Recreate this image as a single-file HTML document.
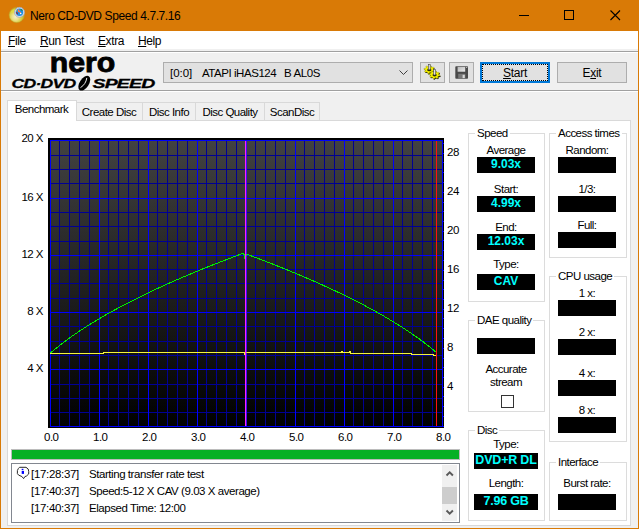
<!DOCTYPE html>
<html><head><meta charset="utf-8"><title>Nero CD-DVD Speed 4.7.7.16</title>
<style>
*{box-sizing:border-box;margin:0;padding:0}
html,body{width:639px;height:529px;overflow:hidden;background:#f0f0f0}
body{position:relative;font-family:"Liberation Sans",Arial,sans-serif;font-size:11.5px;letter-spacing:-0.52px;color:#000;line-height:14px}
.abs{position:absolute}
#win{position:absolute;left:0;top:0;width:639px;height:529px;border:1px solid #d97a06;border-top:none;background:#f0f0f0}
#title{position:absolute;left:0;top:0;width:639px;height:31px;background:#d97a06}
#title .t{position:absolute;left:30px;top:9px;font-size:12px;line-height:15px;white-space:nowrap;letter-spacing:-0.4px}
#menu{position:absolute;left:1px;top:31px;width:637px;height:18px;background:#fff}
#menu span{position:absolute;top:3px;line-height:14px;white-space:nowrap;font-size:12px;letter-spacing:-0.4px}
u{text-decoration:underline;text-underline-offset:1px}
.hline{position:absolute;left:1px;width:637px;height:1px}
.lbl{position:absolute;white-space:nowrap;text-align:center;line-height:14px}
.box{position:absolute;background:#000;height:16px;color:#00ffff;font-weight:bold;text-align:center;font-size:12px;letter-spacing:0;line-height:15px;white-space:nowrap}
.grp{position:absolute;border:1px solid #dcdcdc}
.grp>b{position:absolute;top:-8px;left:6px;background:#fff;font-weight:normal;padding:0 2px;line-height:14px;white-space:nowrap}
.tab{position:absolute;top:102px;height:18px;border:1px solid #d9d9d9;border-bottom:none;background:#f0f0f0;text-align:center;line-height:18px;white-space:nowrap}
.btn{position:absolute;top:62px;height:21px;background:#e1e1e1;border:1px solid #adadad}
.ax{position:absolute;white-space:nowrap;line-height:14px}
</style></head><body>
<div id="win"></div>
<div id="title">
<svg class="abs" style="left:8px;top:6px" width="18" height="18" viewBox="8 6 18 18">
<defs><radialGradient id="cd" cx="0.42" cy="0.62" r="0.62"><stop offset="0" stop-color="#f4eecc"/><stop offset="0.35" stop-color="#ece28c"/><stop offset="0.7" stop-color="#d6ca38"/><stop offset="1" stop-color="#b4a424"/></radialGradient></defs>
<circle cx="16.700" cy="15" r="7.600" fill="url(#cd)" stroke="#b8a834" stroke-width="0.500"/>
<path d="M10.500 12.500a7 7 0 0 1 4-4l1.500 4z" fill="#e8e040" opacity="0.700"/>
<circle cx="19.500" cy="12.300" r="5" fill="#dcdfee" stroke="#9ca0bc" stroke-width="0.700"/>
<circle cx="19.500" cy="12.300" r="3.700" fill="#1e90e4"/>
<path d="M17.800 9.200l1.300 .3 .6 1.600 1.400 1.600 -.8 .6 -1.400-1.400 -.9 .2z" fill="#ff7848"/>
<path d="M16.200 11.800l1 .4 .8 1.800 -.6 .6 -1.100-1.400z" fill="#a01818"/>
<path d="M20.300 9l2 .6 .4 1.200 -1.600-.4z" fill="#208838"/>
<rect x="16.200" y="10.400" width="0.900" height="0.800" fill="#f8e020"/>
<circle cx="20.700" cy="13.500" r="0.800" fill="#fff"/>
</svg>
<div class="t">Nero CD-DVD Speed 4.7.7.16</div>
<svg class="abs" style="left:500px;top:0" width="139" height="31" viewBox="0 0 139 31" shape-rendering="crispEdges">
<rect x="19" y="15" width="10" height="1" fill="#000"/>
<rect x="64.5" y="10.5" width="9" height="9" fill="none" stroke="#000" stroke-width="1"/>
<path d="M110.500 10.500l9.500 9.500M120 10.500l-9.500 9.500" stroke="#000" stroke-width="1.1" fill="none" shape-rendering="auto"/>
</svg>
</div>
<div id="menu">
<span style="left:7px"><u>F</u>ile</span>
<span style="left:39px"><u>R</u>un Test</span>
<span style="left:97px"><u>E</u>xtra</span>
<span style="left:137px"><u>H</u>elp</span>
</div>
<div class="hline" style="top:51px;background:#a0a0a0"></div>
<div class="hline" style="top:52px;background:#fff"></div>
<div class="hline" style="top:90px;background:#a0a0a0"></div>
<div class="hline" style="top:91px;background:#fff"></div>

<!-- logo -->
<svg class="abs" style="left:5px;top:50px" width="160" height="42" viewBox="5 50 160 42">
<text x="49.800" y="71.600" font-family="Liberation Sans, Arial, sans-serif" font-weight="bold" font-size="28.500" textLength="65.500" lengthAdjust="spacingAndGlyphs" fill="#000" stroke="#000" stroke-width="0.9" letter-spacing="0">nero</text>
<text x="11.500" y="87.600" font-family="Liberation Sans, Arial, sans-serif" font-weight="bold" font-style="italic" font-size="12.800" textLength="64" lengthAdjust="spacingAndGlyphs" fill="#000" stroke="#000" stroke-width="0.3">CD·DVD</text>
<text x="92.500" y="87.600" font-family="Liberation Sans, Arial, sans-serif" font-weight="bold" font-style="italic" font-size="12.800" textLength="62" lengthAdjust="spacingAndGlyphs" fill="#000" stroke="#000" stroke-width="0.3">SPEED</text>
<g transform="translate(84.300 83.200) rotate(33)"><ellipse cx="0" cy="0" rx="4.600" ry="8.300" fill="#000"/><path d="M-0.800 -5.800C1 -2 1 2 -0.800 5.800" stroke="#f0f0f0" stroke-width="0.900" fill="none"/></g>
</svg>
<!-- combo -->
<div class="abs" style="left:163px;top:62px;width:250px;height:21px;background:#e1e1e1;border:1px solid #adadad"></div>
<div class="abs" style="left:170px;top:66px;white-space:pre;line-height:14px;letter-spacing:-0.05px">[0:0]</div><div class="abs" style="left:202px;top:66px;white-space:pre;line-height:14px;letter-spacing:-0.45px">ATAPI iHAS124</div><div class="abs" style="left:284px;top:66px;white-space:pre;line-height:14px;letter-spacing:-0.4px">B AL0S</div>
<svg class="abs" style="left:398px;top:69px" width="12" height="8" viewBox="0 0 12 8"><path d="M1.500 1.500l4 4l4-4" stroke="#404040" stroke-width="1" fill="none"/></svg>

<div class="btn" style="left:420px;width:25px"></div>
<svg class="abs" style="left:420px;top:62px" width="25" height="21" viewBox="420 62 25 21">
<path d="M429.85 65.52 L430.91 65.68 L431.23 66.93 L431.89 67.26 L433.56 67.00 L434.16 67.67 L433.20 68.72 L433.35 69.31 L434.77 70.01 L434.56 70.80 L432.89 71.04 L432.44 71.53 L432.78 72.77 L431.88 73.22 L430.47 72.50 L429.69 72.62 L428.75 73.68 L427.69 73.52 L427.37 72.27 L426.71 71.94 L425.04 72.20 L424.44 71.53 L425.40 70.48 L425.25 69.89 L423.83 69.19 L424.04 68.40 L425.71 68.16 L426.16 67.67 L425.82 66.43 L426.72 65.98 L428.13 66.70 L428.91 66.58Z" fill="#181800" transform="translate(0.600 0.900)"/>
<path d="M429.85 65.52 L430.91 65.68 L431.23 66.93 L431.89 67.26 L433.56 67.00 L434.16 67.67 L433.20 68.72 L433.35 69.31 L434.77 70.01 L434.56 70.80 L432.89 71.04 L432.44 71.53 L432.78 72.77 L431.88 73.22 L430.47 72.50 L429.69 72.62 L428.75 73.68 L427.69 73.52 L427.37 72.27 L426.71 71.94 L425.04 72.20 L424.44 71.53 L425.40 70.48 L425.25 69.89 L423.83 69.19 L424.04 68.40 L425.71 68.16 L426.16 67.67 L425.82 66.43 L426.72 65.98 L428.13 66.70 L428.91 66.58Z" fill="#f4f000" stroke="#707000" stroke-width="0.300"/>
<ellipse cx="429.3" cy="69.89999999999999" rx="2.100" ry="1.300" fill="#2a2a00"/>
<rect x="428.3" y="64.4" width="1.900" height="5.400" fill="#e0e0e0" stroke="#484848" stroke-width="0.600"/>
<path d="M435.15 70.72 L436.21 70.88 L436.53 72.13 L437.19 72.46 L438.86 72.20 L439.46 72.87 L438.50 73.92 L438.65 74.51 L440.07 75.21 L439.86 76.00 L438.19 76.24 L437.74 76.73 L438.08 77.97 L437.18 78.42 L435.77 77.70 L434.99 77.82 L434.05 78.88 L432.99 78.72 L432.67 77.47 L432.01 77.14 L430.34 77.40 L429.74 76.73 L430.70 75.68 L430.55 75.09 L429.13 74.39 L429.34 73.60 L431.01 73.36 L431.46 72.87 L431.12 71.63 L432.02 71.18 L433.43 71.90 L434.21 71.78Z" fill="#181800" transform="translate(0.600 0.900)"/>
<path d="M435.15 70.72 L436.21 70.88 L436.53 72.13 L437.19 72.46 L438.86 72.20 L439.46 72.87 L438.50 73.92 L438.65 74.51 L440.07 75.21 L439.86 76.00 L438.19 76.24 L437.74 76.73 L438.08 77.97 L437.18 78.42 L435.77 77.70 L434.99 77.82 L434.05 78.88 L432.99 78.72 L432.67 77.47 L432.01 77.14 L430.34 77.40 L429.74 76.73 L430.70 75.68 L430.55 75.09 L429.13 74.39 L429.34 73.60 L431.01 73.36 L431.46 72.87 L431.12 71.63 L432.02 71.18 L433.43 71.90 L434.21 71.78Z" fill="#f4f000" stroke="#707000" stroke-width="0.300"/>
<ellipse cx="434.6" cy="75.1" rx="2.100" ry="1.300" fill="#2a2a00"/>
<rect x="433.6" y="69.6" width="1.900" height="5.400" fill="#e0e0e0" stroke="#484848" stroke-width="0.600"/>
</svg>
<div class="btn" style="left:449px;width:25px"></div>
<svg class="abs" style="left:455px;top:66px" width="14" height="14" viewBox="0 0 14 14">
<defs><linearGradient id="fl" x1="0" y1="0" x2="1" y2="1"><stop offset="0" stop-color="#b8b8b8"/><stop offset="1" stop-color="#ececec"/></linearGradient></defs>
<rect x="0.300" y="0.300" width="12.700" height="12.400" rx="0.800" fill="#4a4a4a"/>
<rect x="2.600" y="0.900" width="7.600" height="4.800" fill="url(#fl)"/>
<rect x="11.200" y="0.900" width="1" height="1.100" fill="#d0d0d0"/>
<rect x="3.200" y="7.800" width="7.200" height="4.900" fill="#787878"/>
<rect x="7.600" y="8.800" width="2.200" height="3.300" fill="#d8d8d8"/>
</svg>
<div class="btn" style="left:480px;width:70px;border:2px solid #0078d7"></div>
<div class="abs" style="left:482px;top:64px;width:66px;height:17px;border:1px dotted #000"></div>
<div class="lbl" style="left:480px;top:66px;width:70px;font-size:12px;letter-spacing:-0.3px"><u>S</u>tart</div>
<div class="btn" style="left:557px;width:70px"></div>
<div class="lbl" style="left:557px;top:66px;width:70px;font-size:12px;letter-spacing:-0.3px">E<u>x</u>it</div>

<!-- tab panel -->
<div class="abs" style="left:7px;top:120px;width:624px;height:406px;background:#fff;border:1px solid #d9d9d9"></div>
<div class="tab" style="left:75px;width:68px">Create Disc</div>
<div class="tab" style="left:142px;width:54px">Disc Info</div>
<div class="tab" style="left:195px;width:70px">Disc Quality</div>
<div class="tab" style="left:264px;width:56px">ScanDisc</div>
<div class="tab" style="left:7px;top:100px;width:70px;height:21px;background:#fff;line-height:17px;text-indent:-1px">Benchmark</div>

<!-- axes labels -->
<div class="ax" style="left:9px;top:131px;width:34px;text-align:right">20 X</div>
<div class="ax" style="left:9px;top:190px;width:34px;text-align:right">16 X</div>
<div class="ax" style="left:9px;top:247px;width:34px;text-align:right">12 X</div>
<div class="ax" style="left:9px;top:304px;width:34px;text-align:right">8 X</div>
<div class="ax" style="left:9px;top:361px;width:34px;text-align:right">4 X</div>
<div class="ax" style="left:447px;top:145px">28</div>
<div class="ax" style="left:447px;top:184px">24</div>
<div class="ax" style="left:447px;top:223px">20</div>
<div class="ax" style="left:447px;top:262px">16</div>
<div class="ax" style="left:447px;top:301px">12</div>
<div class="ax" style="left:447px;top:340px">8</div>
<div class="ax" style="left:447px;top:379px">4</div>
<div class="ax" style="left:44px;top:430px">0.0</div>
<div class="ax" style="left:93px;top:430px">1.0</div>
<div class="ax" style="left:142px;top:430px">2.0</div>
<div class="ax" style="left:191px;top:430px">3.0</div>
<div class="ax" style="left:240px;top:430px">4.0</div>
<div class="ax" style="left:289px;top:430px">5.0</div>
<div class="ax" style="left:338px;top:430px">6.0</div>
<div class="ax" style="left:387px;top:430px">7.0</div>
<div class="ax" style="left:436px;top:430px">8.0</div>
<svg id="chart" width="400" height="292" viewBox="48 138 400 292" style="position:absolute;left:48px;top:138px" shape-rendering="crispEdges">
<defs><linearGradient id="bg" x1="0" y1="0" x2="0" y2="1"><stop offset="0" stop-color="#424242"/><stop offset="1" stop-color="#000000"/></linearGradient></defs>
<rect x="48" y="138" width="396" height="290" fill="#000"/>
<rect x="50" y="140" width="393" height="287" fill="url(#bg)"/>
<rect x="50" y="140" width="1" height="287" fill="#0000ff"/>
<rect x="59" y="140" width="1" height="287" fill="#000094"/>
<rect x="69" y="140" width="1" height="287" fill="#000094"/>
<rect x="79" y="140" width="1" height="287" fill="#000094"/>
<rect x="89" y="140" width="1" height="287" fill="#000094"/>
<rect x="99" y="140" width="1" height="287" fill="#0000ff"/>
<rect x="108" y="140" width="1" height="287" fill="#000094"/>
<rect x="118" y="140" width="1" height="287" fill="#000094"/>
<rect x="128" y="140" width="1" height="287" fill="#000094"/>
<rect x="138" y="140" width="1" height="287" fill="#000094"/>
<rect x="148" y="140" width="1" height="287" fill="#0000ff"/>
<rect x="157" y="140" width="1" height="287" fill="#000094"/>
<rect x="167" y="140" width="1" height="287" fill="#000094"/>
<rect x="177" y="140" width="1" height="287" fill="#000094"/>
<rect x="187" y="140" width="1" height="287" fill="#000094"/>
<rect x="197" y="140" width="1" height="287" fill="#0000ff"/>
<rect x="206" y="140" width="1" height="287" fill="#000094"/>
<rect x="216" y="140" width="1" height="287" fill="#000094"/>
<rect x="226" y="140" width="1" height="287" fill="#000094"/>
<rect x="236" y="140" width="1" height="287" fill="#000094"/>
<rect x="246" y="140" width="1" height="287" fill="#0000ff"/>
<rect x="255" y="140" width="1" height="287" fill="#000094"/>
<rect x="265" y="140" width="1" height="287" fill="#000094"/>
<rect x="275" y="140" width="1" height="287" fill="#000094"/>
<rect x="285" y="140" width="1" height="287" fill="#000094"/>
<rect x="295" y="140" width="1" height="287" fill="#0000ff"/>
<rect x="304" y="140" width="1" height="287" fill="#000094"/>
<rect x="314" y="140" width="1" height="287" fill="#000094"/>
<rect x="324" y="140" width="1" height="287" fill="#000094"/>
<rect x="334" y="140" width="1" height="287" fill="#000094"/>
<rect x="344" y="140" width="1" height="287" fill="#0000ff"/>
<rect x="353" y="140" width="1" height="287" fill="#000094"/>
<rect x="363" y="140" width="1" height="287" fill="#000094"/>
<rect x="373" y="140" width="1" height="287" fill="#000094"/>
<rect x="383" y="140" width="1" height="287" fill="#000094"/>
<rect x="393" y="140" width="1" height="287" fill="#0000ff"/>
<rect x="402" y="140" width="1" height="287" fill="#000094"/>
<rect x="412" y="140" width="1" height="287" fill="#000094"/>
<rect x="422" y="140" width="1" height="287" fill="#000094"/>
<rect x="432" y="140" width="1" height="287" fill="#000094"/>
<rect x="442" y="140" width="1" height="287" fill="#0000ff"/>
<rect x="50" y="426" width="393" height="1" fill="#0000ff"/>
<rect x="50" y="412" width="393" height="1" fill="#000094"/>
<rect x="50" y="398" width="393" height="1" fill="#000094"/>
<rect x="50" y="384" width="393" height="1" fill="#000094"/>
<rect x="50" y="369" width="393" height="1" fill="#0000ff"/>
<rect x="50" y="355" width="393" height="1" fill="#000094"/>
<rect x="50" y="341" width="393" height="1" fill="#000094"/>
<rect x="50" y="326" width="393" height="1" fill="#000094"/>
<rect x="50" y="312" width="393" height="1" fill="#0000ff"/>
<rect x="50" y="298" width="393" height="1" fill="#000094"/>
<rect x="50" y="283" width="393" height="1" fill="#000094"/>
<rect x="50" y="269" width="393" height="1" fill="#000094"/>
<rect x="50" y="255" width="393" height="1" fill="#0000ff"/>
<rect x="50" y="241" width="393" height="1" fill="#000094"/>
<rect x="50" y="226" width="393" height="1" fill="#000094"/>
<rect x="50" y="212" width="393" height="1" fill="#000094"/>
<rect x="50" y="198" width="393" height="1" fill="#0000ff"/>
<rect x="50" y="183" width="393" height="1" fill="#000094"/>
<rect x="50" y="169" width="393" height="1" fill="#000094"/>
<rect x="50" y="155" width="393" height="1" fill="#000094"/>
<rect x="50" y="140" width="393" height="1" fill="#0000ff"/>
<rect x="50" y="140" width="1" height="287" fill="#0000ff"/>
<rect x="99" y="140" width="1" height="287" fill="#0000ff"/>
<rect x="148" y="140" width="1" height="287" fill="#0000ff"/>
<rect x="197" y="140" width="1" height="287" fill="#0000ff"/>
<rect x="246" y="140" width="1" height="287" fill="#0000ff"/>
<rect x="295" y="140" width="1" height="287" fill="#0000ff"/>
<rect x="344" y="140" width="1" height="287" fill="#0000ff"/>
<rect x="393" y="140" width="1" height="287" fill="#0000ff"/>
<rect x="442" y="140" width="1" height="287" fill="#0000ff"/>
<rect x="443" y="426" width="1" height="1" fill="#0000ff"/>
<rect x="443" y="416" width="1" height="1" fill="#0000ff"/>
<rect x="443" y="406" width="1" height="1" fill="#0000ff"/>
<rect x="443" y="396" width="1" height="1" fill="#0000ff"/>
<rect x="443" y="387" width="1" height="1" fill="#0000ff"/>
<rect x="443" y="377" width="1" height="1" fill="#0000ff"/>
<rect x="443" y="367" width="1" height="1" fill="#0000ff"/>
<rect x="443" y="358" width="1" height="1" fill="#0000ff"/>
<rect x="443" y="348" width="1" height="1" fill="#0000ff"/>
<rect x="443" y="338" width="1" height="1" fill="#0000ff"/>
<rect x="443" y="328" width="1" height="1" fill="#0000ff"/>
<rect x="443" y="318" width="1" height="1" fill="#0000ff"/>
<rect x="443" y="309" width="1" height="1" fill="#0000ff"/>
<rect x="443" y="299" width="1" height="1" fill="#0000ff"/>
<rect x="443" y="289" width="1" height="1" fill="#0000ff"/>
<rect x="443" y="280" width="1" height="1" fill="#0000ff"/>
<rect x="443" y="270" width="1" height="1" fill="#0000ff"/>
<rect x="443" y="260" width="1" height="1" fill="#0000ff"/>
<rect x="443" y="250" width="1" height="1" fill="#0000ff"/>
<rect x="443" y="240" width="1" height="1" fill="#0000ff"/>
<rect x="443" y="231" width="1" height="1" fill="#0000ff"/>
<rect x="443" y="221" width="1" height="1" fill="#0000ff"/>
<rect x="443" y="211" width="1" height="1" fill="#0000ff"/>
<rect x="443" y="202" width="1" height="1" fill="#0000ff"/>
<rect x="443" y="192" width="1" height="1" fill="#0000ff"/>
<rect x="443" y="182" width="1" height="1" fill="#0000ff"/>
<rect x="443" y="172" width="1" height="1" fill="#0000ff"/>
<rect x="443" y="162" width="1" height="1" fill="#0000ff"/>
<rect x="443" y="153" width="1" height="1" fill="#0000ff"/>
<rect x="443" y="143" width="1" height="1" fill="#0000ff"/>
<path d="M50.5,353.0 L51.5,352.1 L52.5,351.3 L53.5,350.4 L54.5,349.6 L55.5,348.8 L56.5,348.0 L57.5,347.2 L58.5,346.4 L59.5,345.6 L60.5,344.8 L61.5,344.0 L62.5,343.2 L63.5,342.5 L64.5,341.7 L65.5,341.0 L66.5,340.2 L67.5,339.5 L68.5,338.8 L69.5,338.0 L70.5,337.3 L71.5,336.6 L72.5,335.9 L73.5,335.2 L74.5,334.5 L75.5,333.8 L76.5,333.1 L77.5,332.5 L78.5,331.8 L79.5,331.1 L80.5,330.4 L81.5,329.8 L82.5,329.1 L83.5,328.5 L84.5,327.8 L85.5,327.2 L86.5,326.5 L87.5,325.9 L88.5,325.3 L89.5,324.7 L90.5,324.0 L91.5,323.4 L92.5,322.8 L93.5,322.2 L94.5,321.6 L95.5,321.0 L96.5,320.4 L97.5,319.8 L98.5,319.2 L99.5,318.6 L100.5,318.0 L101.5,317.4 L102.5,316.8 L103.5,316.2 L104.5,315.7 L105.5,315.1 L106.5,314.5 L107.5,313.9 L108.5,313.4 L109.5,312.8 L110.5,312.3 L111.5,311.7 L112.5,311.1 L113.5,310.6 L114.5,310.0 L115.5,309.5 L116.5,309.0 L117.5,308.4 L118.5,307.9 L119.5,307.3 L120.5,306.8 L121.5,306.3 L122.5,305.7 L123.5,305.2 L124.5,304.7 L125.5,304.2 L126.5,303.6 L127.5,303.1 L128.5,302.6 L129.5,302.1 L130.5,301.6 L131.5,301.1 L132.5,300.6 L133.5,300.1 L134.5,299.6 L135.5,299.1 L136.5,298.6 L137.5,298.1 L138.5,297.6 L139.5,297.1 L140.5,296.6 L141.5,296.1 L142.5,295.6 L143.5,295.1 L144.5,294.6 L145.5,294.1 L146.5,293.7 L147.5,293.2 L148.5,292.7 L149.5,292.2 L150.5,291.8 L151.5,291.3 L152.5,290.8 L153.5,290.3 L154.5,289.9 L155.5,289.4 L156.5,288.9 L157.5,288.5 L158.5,288.0 L159.5,287.6 L160.5,287.1 L161.5,286.6 L162.5,286.2 L163.5,285.7 L164.5,285.3 L165.5,284.8 L166.5,284.4 L167.5,283.9 L168.5,283.5 L169.5,283.0 L170.5,282.6 L171.5,282.1 L172.5,281.7 L173.5,281.3 L174.5,280.8 L175.5,280.4 L176.5,279.9 L177.5,279.5 L178.5,279.1 L179.5,278.6 L180.5,278.2 L181.5,277.8 L182.5,277.4 L183.5,276.9 L184.5,276.5 L185.5,276.1 L186.5,275.7 L187.5,275.2 L188.5,274.8 L189.5,274.4 L190.5,274.0 L191.5,273.6 L192.5,273.1 L193.5,272.7 L194.5,272.3 L195.5,271.9 L196.5,271.5 L197.5,271.1 L198.5,270.7 L199.5,270.2 L200.5,269.8 L201.5,269.4 L202.5,269.0 L203.5,268.6 L204.5,268.2 L205.5,267.8 L206.5,267.4 L207.5,267.0 L208.5,266.6 L209.5,266.2 L210.5,265.8 L211.5,265.4 L212.5,265.0 L213.5,264.6 L214.5,264.2 L215.5,263.8 L216.5,263.4 L217.5,263.1 L218.5,262.7 L219.5,262.3 L220.5,261.9 L221.5,261.5 L222.5,261.1 L223.5,260.7 L224.5,260.3 L225.5,260.0 L226.5,259.6 L227.5,259.2 L228.5,258.8 L229.5,258.4 L230.5,258.1 L231.5,257.7 L232.5,257.3 L233.5,256.9 L234.5,256.5 L235.5,256.2 L236.5,255.8 L237.5,255.4 L238.5,255.0 L239.5,254.7 L240.5,254.3 L241.5,253.9 L242.5,253.6 L243.5,253.2 L243.5,253.2 L244.2,255.0 L245.0,259.3 L246.0,255.5 L247.0,254.6 L248.5,254.6 L249.5,255.6 L250.5,255.6 L251.5,256.0 L252.5,256.4 L253.5,256.7 L254.5,257.1 L255.5,257.5 L256.5,257.9 L257.5,258.2 L258.5,258.6 L259.5,259.0 L260.5,259.4 L261.5,259.8 L262.5,260.1 L263.5,260.5 L264.5,260.9 L265.5,261.3 L266.5,261.7 L267.5,262.1 L268.5,262.5 L269.5,262.9 L270.5,263.3 L271.5,263.6 L272.5,264.0 L273.5,264.4 L274.5,264.8 L275.5,265.2 L276.5,265.6 L277.5,266.0 L278.5,266.4 L279.5,266.8 L280.5,267.2 L281.5,267.6 L282.5,268.0 L283.5,268.4 L284.5,268.8 L285.5,269.2 L286.5,269.6 L287.5,270.0 L288.5,270.5 L289.5,270.9 L290.5,271.3 L291.5,271.7 L292.5,272.1 L293.5,272.5 L294.5,272.9 L295.5,273.3 L296.5,273.8 L297.5,274.2 L298.5,274.6 L299.5,275.0 L300.5,275.4 L301.5,275.9 L302.5,276.3 L303.5,276.7 L304.5,277.1 L305.5,277.6 L306.5,278.0 L307.5,278.4 L308.5,278.9 L309.5,279.3 L310.5,279.7 L311.5,280.2 L312.5,280.6 L313.5,281.0 L314.5,281.5 L315.5,281.9 L316.5,282.4 L317.5,282.8 L318.5,283.3 L319.5,283.7 L320.5,284.1 L321.5,284.6 L322.5,285.0 L323.5,285.5 L324.5,286.0 L325.5,286.4 L326.5,286.9 L327.5,287.3 L328.5,287.8 L329.5,288.2 L330.5,288.7 L331.5,289.2 L332.5,289.6 L333.5,290.1 L334.5,290.6 L335.5,291.0 L336.5,291.5 L337.5,292.0 L338.5,292.5 L339.5,292.9 L340.5,293.4 L341.5,293.9 L342.5,294.4 L343.5,294.9 L344.5,295.4 L345.5,295.8 L346.5,296.3 L347.5,296.8 L348.5,297.3 L349.5,297.8 L350.5,298.3 L351.5,298.8 L352.5,299.3 L353.5,299.8 L354.5,300.3 L355.5,300.8 L356.5,301.3 L357.5,301.8 L358.5,302.4 L359.5,302.9 L360.5,303.4 L361.5,303.9 L362.5,304.4 L363.5,304.9 L364.5,305.5 L365.5,306.0 L366.5,306.5 L367.5,307.1 L368.5,307.6 L369.5,308.1 L370.5,308.7 L371.5,309.2 L372.5,309.8 L373.5,310.3 L374.5,310.9 L375.5,311.4 L376.5,312.0 L377.5,312.5 L378.5,313.1 L379.5,313.7 L380.5,314.2 L381.5,314.8 L382.5,315.4 L383.5,315.9 L384.5,316.5 L385.5,317.1 L386.5,317.7 L387.5,318.3 L388.5,318.9 L389.5,319.5 L390.5,320.1 L391.5,320.7 L392.5,321.3 L393.5,321.9 L394.5,322.5 L395.5,323.1 L396.5,323.7 L397.5,324.3 L398.5,325.0 L399.5,325.6 L400.5,326.2 L401.5,326.9 L402.5,327.5 L403.5,328.2 L404.5,328.8 L405.5,329.5 L406.5,330.1 L407.5,330.8 L408.5,331.5 L409.5,332.1 L410.5,332.8 L411.5,333.5 L412.5,334.2 L413.5,334.9 L414.5,335.6 L415.5,336.3 L416.5,337.0 L417.5,337.7 L418.5,338.4 L419.5,339.1 L420.5,339.9 L421.5,340.6 L422.5,341.4 L423.5,342.1 L424.5,342.9 L425.5,343.6 L426.5,344.4 L427.5,345.2 L428.5,346.0 L429.5,346.8 L430.5,347.6 L431.5,348.4 L432.5,349.2 L433.5,350.0 L434.5,350.9 L435.5,351.7 L435.5,351.2" fill="none" stroke="#00f000" stroke-width="1" shape-rendering="crispEdges"/>
<path d="M50.0,353.5 L103.0,353.5 L103.0,352.5 L244.0,352.5 L245.0,354.5 L246.0,352.5 L341.0,352.5 L342.0,351.5 L343.0,352.5 L349.0,352.5 L350.0,351.5 L351.0,353.5 L411.0,353.5 L411.0,354.5 L433.0,354.5 L433.0,355.5 L436.0,355.5" fill="none" stroke="#f4f43c" stroke-width="1" shape-rendering="crispEdges"/>
<rect x="245" y="141" width="1" height="285" fill="#ff20ff"/>
<rect x="246" y="141" width="1" height="285" fill="#c020e0" opacity="0.35"/>
<rect x="436" y="141" width="1" height="285" fill="#ff1010"/>
</svg>

<!-- progress -->
<div class="abs" style="left:11px;top:449px;width:449px;height:11px;background:#06b025;border:1px solid #bcbcbc"></div>
<!-- log -->
<div class="abs" style="left:11px;top:463px;width:449px;height:60px;background:#fff;border:1px solid #828790"></div>
<div class="abs" style="left:442px;top:465px;width:15px;height:56px;background:#f0f0f0"></div>
<div class="abs" style="left:442px;top:487px;width:15px;height:17px;background:#cdcdcd"></div>
<svg class="abs" style="left:445px;top:470px" width="10" height="7" viewBox="0 0 10 7"><path d="M1.500 5.500l3.200-3.200l3.200 3.200" stroke="#5a5a5a" stroke-width="1.900" fill="none"/></svg>
<svg class="abs" style="left:445px;top:509px" width="10" height="7" viewBox="0 0 10 7"><path d="M1.500 1.500l3.200 3.200l3.200-3.200" stroke="#5a5a5a" stroke-width="1.900" fill="none"/></svg>
<svg class="abs" style="left:16px;top:466px" width="14" height="14" viewBox="16 466 14 14"><path d="M19.500 467.300h6.500l2.200 1.700l.5 2.300v2.700l-2.200 2l-1.600 .6l-1.300 2l-1.700-2.100l-3.200-1.300l-1.300-1.600v-3.100l1-2z" fill="#fff" stroke="#2a2a2a" stroke-width="1" stroke-linejoin="round"/><rect x="21.700" y="468.800" width="1.700" height="1.300" fill="#0000ff"/><rect x="21.700" y="470.900" width="2.300" height="3" fill="#0000ff"/></svg>
<div class="abs" style="left:31px;top:466px;line-height:17px;white-space:pre;letter-spacing:-0.32px">[17:28:37]
[17:40:37]
[17:40:37]</div>
<div class="abs" style="left:89px;top:466px;line-height:17px;white-space:pre;letter-spacing:-0.44px">Starting transfer rate test
Speed:5-12 X CAV (9.03 X average)
Elapsed Time: 12:00</div>

<!-- Speed group -->
<div class="grp" style="left:468px;top:133px;width:77px;height:169px"><b>Speed</b></div>
<div class="lbl" style="left:477px;top:143px;width:58px">Average</div>
<div class="box" style="left:477px;top:157px;width:58px">9.03x</div>
<div class="lbl" style="left:477px;top:182px;width:58px">Start:</div>
<div class="box" style="left:477px;top:196px;width:58px">4.99x</div>
<div class="lbl" style="left:477px;top:220px;width:58px">End:</div>
<div class="box" style="left:477px;top:234px;width:58px">12.03x</div>
<div class="lbl" style="left:477px;top:257px;width:58px">Type:</div>
<div class="box" style="left:477px;top:274px;width:58px">CAV</div>

<!-- Access times -->
<div class="grp" style="left:549px;top:133px;width:78px;height:125px"><b>Access times</b></div>
<div class="lbl" style="left:558px;top:143px;width:58px">Random:</div>
<div class="box" style="left:558px;top:157px;width:58px"></div>
<div class="lbl" style="left:558px;top:182px;width:58px">1/3:</div>
<div class="box" style="left:558px;top:196px;width:58px"></div>
<div class="lbl" style="left:558px;top:218px;width:58px">Full:</div>
<div class="box" style="left:558px;top:232px;width:58px"></div>

<!-- CPU usage -->
<div class="grp" style="left:549px;top:276px;width:78px;height:166px"><b>CPU usage</b></div>
<div class="lbl" style="left:558px;top:286px;width:58px">1 x:</div>
<div class="box" style="left:558px;top:300px;width:58px;height:16px"></div>
<div class="lbl" style="left:558px;top:325px;width:58px">2 x:</div>
<div class="box" style="left:558px;top:339px;width:58px;height:16px"></div>
<div class="lbl" style="left:558px;top:366px;width:58px">4 x:</div>
<div class="box" style="left:558px;top:380px;width:58px;height:16px"></div>
<div class="lbl" style="left:558px;top:403px;width:58px">8 x:</div>
<div class="box" style="left:558px;top:417px;width:58px;height:16px"></div>

<!-- DAE -->
<div class="grp" style="left:468px;top:320px;width:77px;height:92px"><b>DAE quality</b></div>
<div class="box" style="left:477px;top:338px;width:58px"></div>
<div class="lbl" style="left:477px;top:362px;width:58px">Accurate</div>
<div class="lbl" style="left:477px;top:375px;width:58px">stream</div>
<div class="abs" style="left:501px;top:395px;width:13px;height:13px;background:#fff;border:1px solid #333"></div>

<!-- Disc -->
<div class="grp" style="left:468px;top:430px;width:77px;height:91px"><b>Disc</b></div>
<div class="lbl" style="left:474px;top:437px;width:64px">Type:</div>
<div class="box" style="left:474px;top:453px;width:64px;height:16px;font-size:12.5px;line-height:15px;letter-spacing:-0.2px">DVD+R DL</div>
<div class="lbl" style="left:474px;top:476px;width:64px">Length:</div>
<div class="box" style="left:474px;top:494px;width:64px;height:16px;font-size:12.5px;line-height:15px;letter-spacing:-0.2px">7.96 GB</div>

<!-- Interface -->
<div class="grp" style="left:549px;top:462px;width:78px;height:59px"><b>Interface</b></div>
<div class="lbl" style="left:558px;top:476px;width:58px">Burst rate:</div>
<div class="box" style="left:558px;top:494px;width:58px"></div>
</body></html>
